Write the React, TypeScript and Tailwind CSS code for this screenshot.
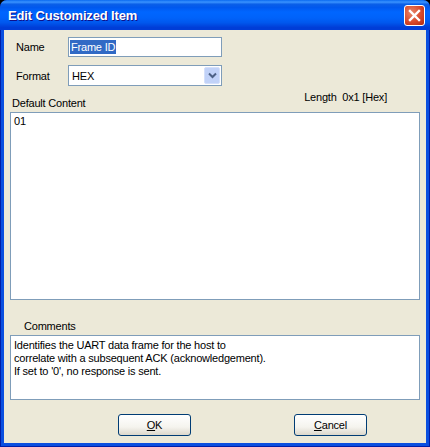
export default function App() {
  return (
    <div className="w-[430px] h-[447px] bg-black overflow-hidden font-['Liberation_Sans',sans-serif] text-[11px] leading-[13px] tracking-[-0.2px] text-black">
      <div className="w-full h-full flex flex-col rounded-t-[7px] overflow-hidden bg-[#001ea8]">
        <div className="h-[30px] shrink-0 flex items-center justify-between pl-[8px] pr-[5px] bg-[linear-gradient(180deg,#0a6af0_0%,#3a93ff_7%,#0a5fe8_14%,#0058ee_25%,#0066ff_40%,#0062fa_60%,#0058ee_75%,#003dd7_92%,#003dd7_100%)]">
          <span className="text-white font-bold text-[13px] tracking-[-0.15px] [text-shadow:1px_1px_#0f1089]">Edit Customized Item</span>
          <div className="w-[21px] h-[21px] rounded-[3px] border border-white flex items-center justify-center bg-[radial-gradient(circle_at_35%_35%,#e8876a_0%,#d8492b_55%,#b0290f_100%)]">
            <svg width="13" height="13" viewBox="0 0 13 13"><path d="M2 2 L11 11 M11 2 L2 11" stroke="#fff" strokeWidth="2.4" strokeLinecap="square" /></svg>
          </div>
        </div>
        <div className="flex-1 flex flex-col mx-[1px] mb-[1px] border-x-[3px] border-b-[3px] border-[#0a4fe0] bg-[#ece9d8] px-[6px]">
          <div className="flex items-center h-[20px] mt-[7px] pl-[6px]">
            <span className="w-[52px]">Name</span>
            <div className="w-[154px] h-[20px] bg-white border border-[#7f9db9] flex items-center pl-[1px]">
              <span className="bg-[#316ac5] text-white px-[1px] leading-[14px]">Frame ID</span>
            </div>
          </div>
          <div className="flex items-center h-[21px] mt-[8px] pl-[6px]">
            <span className="w-[52px] mt-[2px]">Format</span>
            <div className="w-[154px] h-[21px] bg-white border border-[#7f9db9] flex items-center justify-between pl-[3px] pr-[1px]">
              <span className="mt-[1px]">HEX</span>
              <div className="w-[16px] h-[17px] rounded-[2px] bg-[#c1d2f8] border border-[#d4e0fb] flex items-center justify-center">
                <svg width="9" height="7" viewBox="0 0 9 7"><path d="M1 1.5 L4.5 5 L8 1.5" fill="none" stroke="#4d6185" strokeWidth="2" /></svg>
              </div>
            </div>
          </div>
          <div className="flex justify-between h-[26px] pl-[2px] pr-[33px]">
            <span className="mt-[11px]">Default Content</span>
            <span className="mt-[5px]">Length&nbsp; 0x1 [Hex]</span>
          </div>
          <div className="h-[188px] bg-white border border-[#7f9db9] pl-[3px] pt-[2px]">01</div>
          <div className="h-[35px] pl-[14px] pt-[20px]">Comments</div>
          <div className="h-[65px] bg-white border border-[#7f9db9] pl-[3px] pt-[3px]">
            <div>Identifies the UART data frame for the host to</div>
            <div>correlate with a subsequent ACK (acknowledgement).</div>
            <div>If set to '0', no response is sent.</div>
          </div>
          <div className="flex mt-[14px] pl-[108px] gap-[103px]">
            <button className="w-[73px] h-[22px] pt-[1px] rounded-[3px] border border-[#003c74] bg-[linear-gradient(180deg,#ffffff_0%,#f5f4ee_60%,#dcd8cc_100%)] text-center"><span className="underline">O</span>K</button>
            <button className="w-[73px] h-[22px] pt-[1px] rounded-[3px] border border-[#003c74] bg-[linear-gradient(180deg,#ffffff_0%,#f5f4ee_60%,#dcd8cc_100%)] text-center"><span className="underline">C</span>ancel</button>
          </div>
        </div>
      </div>
    </div>
  );
}
